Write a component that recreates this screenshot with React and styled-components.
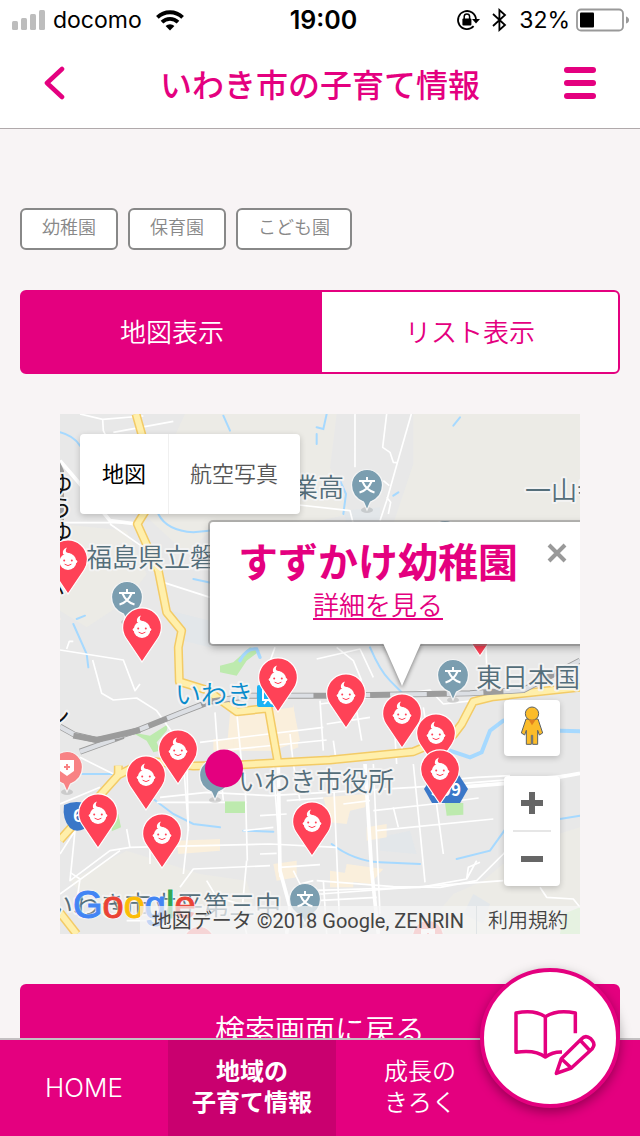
import React from "react";
import styled, { createGlobalStyle, css } from "styled-components";

const pink = "#e4007f";
const jp = `"Noto Sans CJK JP", sans-serif`;

const GlobalStyle = createGlobalStyle`
  *, *::before, *::after { box-sizing: border-box; }
  body { margin: 0; font-family: ${jp}; font-weight: 350; background: #f8f4f5; }
  button { font: inherit; border: 0; padding: 0; margin: 0; background: none; cursor: pointer; }
  a { color: inherit; text-decoration: none; }
  svg { display: block; flex: none; }
`;

const Shell = styled.div`
  display: flex;
  flex-direction: column;
  height: 100vh;
`;

/* ---------- status bar ---------- */

const StatusBar = styled.div`
  display: grid;
  grid-template-columns: 1fr auto 1fr;
  align-items: center;
  flex: none;
  height: 40px;
  padding: 0 11px 0 12px;
  background: #fff;
  color: #000;
  font-family: Inter, sans-serif;
  font-size: 23px;
  font-weight: 400;
`;

const StatusGroup = styled.div`
  display: flex;
  align-items: center;
  justify-content: ${(p) => (p.$end ? "flex-end" : "flex-start")};
  gap: ${(p) => (p.$end ? 12 : 8)}px;
`;

const Carrier = styled.span`
  margin-right: 6px;
`;

const Clock = styled.time`
  padding-left: 6px;
  font-size: 25px;
  font-weight: 600;
`;

const BatteryRow = styled.span`
  display: flex;
  align-items: center;
  gap: 6px;
`;

/* ---------- header ---------- */

const Header = styled.header`
  display: flex;
  align-items: center;
  justify-content: space-between;
  flex: none;
  height: 89px;
  padding: 0 38px 2px 32px;
  background: #fff;
  border-bottom: 1px solid #b0a9ab;
`;

const IconButton = styled.button`
  display: flex;
  align-items: center;
  justify-content: center;
  width: 44px;
  height: 44px;
  color: ${pink};
`;

const Title = styled.h1`
  flex: 1;
  margin: 0;
  padding-left: 6px;
  color: ${pink};
  font-size: 32px;
  line-height: 40px;
  font-weight: 500;
  text-align: center;
`;

/* ---------- main ---------- */

const Main = styled.main`
  flex: 1;
  min-height: 0;
  overflow-y: auto;
  scrollbar-width: none;
  display: flex;
  flex-direction: column;
  padding: 79px 20px 40px;
`;

const Tags = styled.ul`
  display: flex;
  gap: 10px;
  margin: 0 0 40px;
  padding: 0;
  list-style: none;
`;

const Tag = styled.li`
  height: 42px;
  padding: 0 20px;
  border: 2px solid #888;
  border-radius: 6px;
  background: #fff;
  color: #888;
  font-size: 18px;
  line-height: 32px;
`;

const Segments = styled.div`
  display: flex;
  flex: none;
  height: 84px;
  margin-bottom: 40px;
  border: 2px solid ${pink};
  border-radius: 6px;
  overflow: hidden;
  background: ${pink};
`;

const Segment = styled.button`
  flex: ${(p) => (p.$active ? "1 0 4px" : "1 0 0")};
  && { padding-bottom: 4px; }
  background: ${(p) => (p.$active ? pink : "#fff")};
  color: ${(p) => (p.$active ? "#fff" : pink)};
  font-size: 26px;
`;

const BackToSearch = styled.a`
  flex: none;
  margin-top: 50px;
  height: 92px;
  border-radius: 6px;
  background: ${pink};
  color: #fff;
  font-size: 30px;
  line-height: 88px;
  text-align: center;
`;

/* ---------- map ---------- */

const MapFrame = styled.section`
  position: relative;
  flex: none;
  height: 520px;
  margin: 0 40px;
  overflow: hidden;
  background: #e8e8e8;
`;

const MapDrawing = styled.svg`
  width: 100%;
  height: 100%;
`;

const controlBox = css`
  background: #fff;
  border-radius: 4px;
  box-shadow: 0 2px 6px rgba(0, 0, 0, 0.2);
`;

const MapTypes = styled.div`
  ${controlBox}
  position: absolute;
  top: 20px;
  left: 20px;
  display: flex;
  height: 80px;
`;

const MapType = styled.button`
  && { padding: 0 22px 4px; }
  font-size: 22px;
  font-weight: ${(p) => (p.$active ? 400 : 350)};
  color: ${(p) => (p.$active ? "#000" : "#565656")};
  & + & { box-shadow: inset 1px 0 #f0f0f0; }
`;

const MapControls = styled.div`
  position: absolute;
  right: 20px;
  bottom: 48px;
  display: flex;
  flex-direction: column;
  gap: 20px;
`;

const Pegman = styled.button`
  ${controlBox}
  width: 56px;
  height: 56px;
`;

const ZoomBox = styled.div`
  ${controlBox}
  display: flex;
  flex-direction: column;
  align-items: center;
  height: 110px;
`;

const ZoomButton = styled.button`
  display: flex;
  flex: 1;
  align-items: center;
  justify-content: center;
  width: 56px;
`;

const ZoomRule = styled.hr`
  width: 38px;
  height: 2px;
  margin: 0;
  border: 0;
  background: #e6e6e6;
`;

const InfoWindow = styled.div`
  position: absolute;
  top: 108px;
  left: 150px;
  width: 386px;
  height: 122px;
  padding: 14px 50px 0 0;
  background: #fff;
  border-radius: 3px;
  box-shadow: 0 0 0 2px rgba(120, 120, 120, 0.45), 0 3px 8px rgba(0, 0, 0, 0.35);
  color: ${pink};
  text-align: center;
`;

const InfoTail = styled.svg`
  position: absolute;
  top: 121px;
  left: 168px;
  overflow: visible;
  filter: drop-shadow(0 2px 2px rgba(0, 0, 0, 0.45));
  clip-path: inset(0 -8px -8px -8px);
`;

const InfoTitle = styled.h2`
  margin: 0;
  font-size: 40px;
  line-height: 48px;
  font-weight: 700;
`;

const InfoLink = styled.a`
  display: inline-block;
  border-bottom: 2px solid ${pink};
  font-size: 26px;
  line-height: 28px;
  margin-top: 6px;
`;

const CloseButton = styled.button`
  position: absolute;
  top: 19px;
  left: 335px;
  width: 24px;
  height: 24px;
`;

const Logo = styled.span`
  position: absolute;
  left: 13px;
  bottom: 7px;
  font-family: "Liberation Sans", sans-serif;
  font-size: 38px;
  line-height: 44px;
  text-shadow: 0 0 2px #fff, 0 0 2px #fff, 0 0 3px #fff;
  -webkit-text-stroke: 1px currentColor;
`;

const LogoLetter = styled.span`
  color: ${(p) => p.$color};
`;

const Credits = styled.div`
  position: absolute;
  right: 0;
  bottom: 0;
  display: flex;
  height: 28px;
  background: rgba(245, 245, 245, 0.72);
  color: #444;
  font-family: Roboto, ${jp};
  font-size: 20px;
  font-weight: 400;
  line-height: 30px;
  white-space: nowrap;
`;

const Credit = styled.span`
  padding: 0 12px;
  & + & { box-shadow: inset 1px 0 #e0e4e6; font-weight: 350; }
`;

const Label = styled.text`
  font-family: ${jp};
  font-size: ${(p) => p.$size || 26}px;
  font-weight: ${(p) => p.$weight || 350};
  fill: ${(p) => p.$color || "#546e7a"};
  stroke: ${(p) => (p.$plain ? "none" : "rgba(245, 245, 245, 0.9)")};
  stroke-width: 4px;
  stroke-linejoin: round;
  paint-order: stroke;
`;

const SideLabel = styled(Label)`
  writing-mode: vertical-rl;
`;

/* ---------- bottom navigation ---------- */

const Nav = styled.nav`
  position: relative;
  display: grid;
  grid-template-columns: 168fr 168fr 168fr 136fr;
  flex: none;
  height: 98px;
  border-top: 2px solid #c4c0c2;
  background: ${pink};
`;

const NavItem = styled.a`
  display: flex;
  align-items: center;
  justify-content: center;
  padding-bottom: 2px;
  background: ${(p) => (p.$active ? "#c9006f" : "transparent")};
  color: #fff;
  font-family: Inter, ${jp};
  font-size: ${(p) => (p.$latin ? 26 : 24)}px;
  font-weight: ${(p) => (p.$active ? 700 : p.$latin ? 300 : 350)};
  line-height: 31px;
  text-align: center;
`;

const RecordButton = styled.button`
  position: absolute;
  top: -72px;
  right: 20px;
  width: 140px;
  height: 140px;
  && { border: 4px solid ${pink}; }
  border-radius: 50%;
  && { background: #fff; }
  box-shadow: 0 4px 12px rgba(0, 0, 0, 0.35);
`;

/* ---------- drawings ---------- */

const SignalIcon = () => (
  <svg width="33" height="20" fill="#bdbdbd" aria-hidden="true">
    <rect x="0" y="11" width="6" height="9" rx="1.5" />
    <rect x="9" y="8" width="6" height="12" rx="1.5" />
    <rect x="18" y="4" width="6" height="16" rx="1.5" />
    <rect x="27" y="0" width="6" height="20" rx="1.5" />
  </svg>
);

const WifiIcon = () => (
  <svg width="28" height="21" viewBox="0 0 28 21" aria-hidden="true">
    <g fill="none" stroke="#000" strokeWidth="3.8">
      <path d="M1.4 7.4A18 18 0 0 1 26.6 7.4" />
      <path d="M6 12.2A11.4 11.4 0 0 1 22 12.2" />
    </g>
    <path d="M14 20.5L9.6 16A6.3 6.3 0 0 1 18.4 16Z" />
  </svg>
);

const RotationLockIcon = () => (
  <svg width="24" height="22" viewBox="0 0 24 22" aria-hidden="true">
    <path d="M17.6 17.2A9 9 0 1 1 20 10.5" fill="none" stroke="#000" strokeWidth="1.8" />
    <path d="M16 10H24L20 14.5Z" />
    <rect x="6.4" y="9.6" width="9" height="6.8" rx="1" />
    <path d="M8.2 10V7.6a2.7 2.7 0 0 1 5.4 0V10" fill="none" stroke="#000" strokeWidth="1.5" />
  </svg>
);

const BluetoothIcon = () => (
  <svg width="15" height="24" viewBox="0 0 15 24" aria-hidden="true">
    <path d="M1 6L13 17L7.4 22V2L13 7L1 18" fill="none" stroke="#000" strokeWidth="1.8" />
  </svg>
);

const BatteryIcon = () => (
  <svg width="53" height="24" viewBox="0 0 53 24" aria-hidden="true">
    <rect x="1" y="1.5" width="46" height="21" rx="4" fill="none" stroke="#999" strokeWidth="1.8" />
    <rect x="4" y="4.5" width="14" height="15" rx="1" />
    <path d="M50 8.5Q53 9.500 53 12T50 15.500Z" fill="#999" />
  </svg>
);

const BackIcon = () => (
  <svg width="22" height="34" viewBox="0 0 22 34" aria-hidden="true">
    <path d="M19 3L4 17L19 31" fill="none" stroke={pink} strokeWidth="4.6" strokeLinecap="round" strokeLinejoin="round" />
  </svg>
);

const MenuIcon = () => (
  <svg width="32" height="32" viewBox="0 0 32 32" fill={pink} aria-hidden="true">
    <rect y="0" width="32" height="6" rx="3" />
    <rect y="13" width="32" height="6" rx="3" />
    <rect y="26" width="32" height="6" rx="3" />
  </svg>
);

const PegmanIcon = () => (
  <svg width="56" height="56" viewBox="0 0 168 168" aria-hidden="true">
    <g fill="#fbbc2a" stroke="#5c6266" strokeWidth="3" strokeLinejoin="round">
      <path d="M66 57H102L116 99L106 105L101 91V133H86V106H82V133H67V91L62 105L52 99Z" />
      <circle cx="84" cy="41" r="20" />
    </g>
    <path d="M74 59H95L84 76Z" fill="#e2801e" />
  </svg>
);

const BookIcon = () => (
  <svg width="132" height="132" viewBox="492 66 396 396" aria-hidden="true">
    <g fill="none" stroke={pink} strokeWidth="10.5" strokeLinejoin="round">
      <path d="M726 306Q698 305 676 321Q645 298 588 307V189Q642 177 676 200Q712 177 766 189V250" />
      <path d="M676 200V322" />
      <path d="M709 370L724 326L784 267Q797 253 812 266L817 272Q827 284 816 297L754 354Z" />
      <path d="M724 326L754 354M780 270L808 300" />
    </g>
  </svg>
);

const BabyPin = ({ x, y }) => (
  <g transform={`translate(${x} ${y})`}>
    <path d="M0 54L-16.2 30A19.4 19.4 0 1 1 16.2 30Z" fill="#ff4257" stroke="#fff" strokeWidth="1.2" />
    <circle cy="21.6" r="8.4" fill="#fff" />
    <path d="M-7.8 21.6h15.6" stroke="#fff" strokeWidth="3" strokeLinecap="round" />
    <path d="M-1 7.6Q-6 9.500-5 14L0 15L2.500 13.500Q-2.500 13.200-2.200 10.600Q-2 9-1 7.600Z" fill="#fff" />
    <circle cx="-3.8" cy="20.6" r="1" fill="#ff4257" />
    <circle cx="3.8" cy="20.6" r="1" fill="#ff4257" />
    <path d="M-3.4 24.200Q0 27 3.400 24.200" fill="none" stroke="#ff4257" strokeWidth="1" />
  </g>
);

const PlacePin = ({ x, y, color = "#7b9eb0", children }) => (
  <g transform={`translate(${x} ${y})`}>
    <ellipse cy="25" rx="6" ry="3" fill="#000" opacity=".12" />
    <path d="M0 25L-3.5 17Q-15.5 12-15.5 0A15.5 15.5 0 0 1 15.5 0Q15.5 12 3.5 17Z" fill={color} stroke="#f5f5f5" strokeWidth="1.2" />
    {children}
  </g>
);

const SchoolPin = ({ x, y }) => (
  <PlacePin x={x} y={y}>
    <path d="M0-8V-4M-8-4H8M-4.5-3.5Q-1 5 7.5 7.5M4.5-3.5Q1 5-7.5 7.5" fill="none" stroke="#fff" strokeWidth="2" />
  </PlacePin>
);

const HospitalPin = ({ x, y }) => (
  <PlacePin x={x} y={y} color="#f88284">
    <path d="M-7-7H7V4L0 9L-7 4Z" fill="#fff" />
    <path d="M-3 0H3M0-3V3" stroke="#f88284" strokeWidth="2" />
  </PlacePin>
);

const babyPins = [
  [420, 188], [8, 126], [82, 194], [218, 244], [286, 260], [342, 280],
  [376, 300], [380, 336], [118, 316], [86, 342], [38, 380], [102, 400], [252, 388],
];

const highways = [
  "M228 0L245 60L257 290L232 330L295 470L320 595L365 650L355 700L358 803L440 828L530 893L625 883L653 1040",
  "M0 1278L175 1083L260 1040L400 1056L530 1053L810 1038L1060 1013L1180 963L1205 930L1240 863L1300 848L1560 820",
  "M175 1083V1055",
  "M0 1496L50 1560",
];

const railways = [
  "M0 938L45 963L110 978L180 966L235 948L360 898L450 863L570 845L810 845L1230 838L1390 828L1560 740",
  "M60 1013L190 966",
];

const streets = [
  "M60 0L128 16L250 6M128 16L130 50L150 90M160 55L340 22",
  "M0 140L60 210L150 320L230 330M0 326H200M150 330L250 400",
  "M310 505L450 550M0 708L190 738L225 830L240 810M20 705L28 682H40",
  "M98 738L125 838L160 858L230 852L290 890L340 960L380 1010L385 1250",
  "M690 270L870 290L880 330M885 0V160M980 0L968 100L990 115L1000 145L1012 146M1054 0L1012 146L980 260L960 320M970 200L988 215M980 250L992 265L985 300",
  "M770 735L900 705L940 790M830 700L880 740L905 800M645 700L620 770",
  "M465 895L475 1035M530 893L545 1050M780 860L790 1010M640 1060L655 1260L660 1390",
  "M420 985L790 940M480 1010L800 978M780 870L1110 828L1150 870L1240 860M800 930L930 910",
  "M300 1150L440 1135L630 1145L1060 1120L1560 1080M290 1165H560",
  "M370 1040L385 1240L370 1380M480 1060L490 1160M555 1080L562 1340M600 1205L680 1200",
  "M200 1245L210 1300L630 1290L830 1300M0 1320L45 1250L30 1400L150 1310L210 1300",
  "M30 1375L60 1395L45 1500M180 1310L0 1440M270 1240V1350M360 1420L400 1365L630 1355",
  "M660 1360L780 1352M700 1370L720 1410L760 1400M680 1160L790 1152M820 1080L840 1560M880 830L905 980M940 1050L960 1500M1000 880L1010 1050",
  "M940 1190L1120 1170L1256 1152M950 1250L1300 1215M1060 1050L1080 1250L1095 1405M1120 1100L1150 1320M1140 1100L1250 1090L1350 1085",
  "M770 1400L1000 1418L1140 1420L1250 1400L1330 1320L1400 1240M740 1430L1080 1420L1220 1395L1250 1340M1220 1395L1225 1360L1260 1345",
  "M780 1440L1330 1400M770 1460L950 1450M790 1400L800 1560M200 1520L260 1520M440 1400L470 1450L540 1470M560 1340L545 1500L560 1560",
  "M720 1160L700 1050L690 960M850 1170L930 1160M1000 1180L1015 1240M1440 1420L1460 1450L1540 1455L1560 1480M1278 700L1280 760",
  "M60 1030L180 1090M0 1170L120 1120M820 980L830 1050M1090 880L1110 1000M640 1240L550 1250M600 1320L650 1318",
];

const wideStreets = [
  "M0 140L60 210L150 320L230 330",
  "M655 1060L660 1370L690 1480L680 1560",
  "M915 1050L935 1370L955 1560",
  "M1190 1120L1440 1100L1560 1078",
];

const waters = [
  "M0 55Q40 65 60 95", "M490 5L510 50", "M770 40L790 45L800 0M770 90V60",
  "M295 300Q320 350 400 355L470 348", "M400 495L470 510", "M40 630L80 720L85 760M50 615L75 605",
  "M1180 35L1200 10", "M840 200L858 240L850 300M1000 245L1015 235",
  "M930 700Q960 770 990 800L1030 840", "M280 1155L340 1200L400 1230L480 1240M550 1250L640 1253",
  "M815 1290Q880 1340 960 1345L1080 1350M1190 1335L1290 1310L1340 1240L1400 1200L1500 1215L1560 1205",
  "M60 1080L200 1080",
];

const MapArtwork = () => (
  <svg width="520" height="520" viewBox="0 0 1560 1560">
    <rect width="1560" height="1560" fill="#e8e8e8" />
    <g fill="#ecebe6">
      <path d="M375 0H830L810 160L870 300L690 340L450 350L380 420L240 290Z" />
      <path d="M1060 0H1560V330H1000L1030 240L1060 150Z" />
      <path d="M0 330L200 350L260 480L200 560L80 640L0 590Z" />
      <path d="M30 1400L200 1310L420 1380L560 1400L580 1470L300 1500L100 1480Z" />
      <path d="M1560 1240L1400 1290L1270 1400L1180 1440L1080 1560H1560Z" />
    </g>
    <g fill="#e3e7ea">
      <path d="M330 590L450 620V700L370 680Z" />
      <path d="M960 1270L1050 1250L1070 1320L960 1310Z" />
      <path d="M1240 1440L1290 1470L1270 1530L1210 1500Z" />
      <path d="M850 290L960 280V330H860Z" />
    </g>
    <g fill="#faefdc">
      <path d="M510 900L620 890L700 880L720 980L640 1010L500 1010Z" />
      <path d="M460 975H520V1010H460Z" />
      <path d="M350 1280L480 1275V1310L355 1320Z" />
      <path d="M640 1350L710 1340V1390L650 1400Z" />
      <path d="M790 1150L920 1140L915 1180L870 1190L860 1230L810 1225Z" />
      <path d="M920 1240L980 1230V1270L920 1280Z" />
      <path d="M860 1350L970 1365L930 1410L850 1400ZM810 1370L880 1380V1420H810Z" />
      <path d="M700 870L715 1000L690 1010Z" />
    </g>
    <g fill="#bdeaae">
      <path d="M480 755L520 745L570 700L600 710L560 740L530 785L480 775Z" />
      <path d="M215 955L270 965L325 930L320 950L290 985L300 1010L280 1015L260 980Z" />
      <path d="M160 1210L175 1200L183 1240L155 1252Z" />
      <path d="M1510 1500L1560 1480V1560H1500Z" />
    </g>
    <g fill="none" stroke="#a6d9ff" strokeWidth="6" strokeLinecap="round">
      {waters.map((d) => <path key={d} d={d} />)}
      <path d="M540 740Q560 700 590 705L600 730" strokeWidth="10" />
      <path d="M1170 1010L1230 1030L1265 1015L1290 950L1330 920M1500 950L1560 952" strokeWidth="12" />
    </g>
    <g fill="none" stroke="#fff" strokeWidth="5" strokeLinejoin="round">
      {streets.map((d) => <path key={d} d={d} />)}
    </g>
    <g fill="none" stroke="#fff" strokeWidth="11" strokeLinejoin="round">
      {wideStreets.map((d) => <path key={d} d={d} />)}
    </g>
    <g fill="#bdeaae">
      <path d="M495 1162H555V1197H495Z" />
      <path d="M1155 1167H1210V1202L1160 1205Z" />
    </g>
    <g fill="none" strokeLinejoin="round">
      {highways.map((d) => <path key={d} d={d} stroke="#f3cb66" strokeWidth="27" />)}
      {highways.map((d) => <path key={d} d={d} stroke="#ffefab" strokeWidth="18" />)}
      {railways.map((d) => <path key={d} d={d} stroke="#9c9c9c" strokeWidth="18" />)}
      {railways.map((d) => <path key={d} d={d} stroke="#dcdfe4" strokeWidth="13" strokeDasharray="110 60" />)}
    </g>
    <path d="M40 965L110 978L240 948" fill="none" stroke="#9c9c9c" strokeWidth="18" />
    <path d="M0 145L12 170V360H0Z" fill="#9c9c9c" />
  </svg>
);

const MapPicture = () => (
  <MapDrawing viewBox="0 0 520 520" preserveAspectRatio="xMinYMin slice" role="img" aria-label="地図">
    <MapArtwork />
    <SideLabel x="1" y="58" $size={24} $weight={400} $color="#111">ゆうゆう</SideLabel>
    <SideLabel x="-7" y="160" $size={24} $weight={400} $color="#111">ぶく</SideLabel>
    <SideLabel x="-2" y="290" $size={24} $weight={400} $color="#111">ン</SideLabel>
    <Label x="232" y="83">業高</Label>
    <Label x="465" y="86">一山寺</Label>
    <Label x="26" y="153">福島県立磐城</Label>
    <Label x="416" y="273">東日本国際</Label>
    <Label x="115" y="290" $color="#0a8ccc">いわき</Label>
    <Label x="178" y="377">いわき市役所</Label>
    <Label x="-13" y="501">いわき市立平第三中</Label>
    <rect x="197" y="271" width="22" height="22" rx="2" fill="#1ab3f5" />
    <path d="M203 275H213V286H203ZM204 290L207 286M212 290L209 286" fill="none" stroke="#fff" strokeWidth="2" />
    <SchoolPin x={67} y={183} />
    <SchoolPin x={307} y={71} />
    <SchoolPin x={385} y={122} />
    <SchoolPin x={393} y={261} />
    <SchoolPin x={245} y={485} />
    <PlacePin x={155} y={361} />
    <HospitalPin x={7} y={353} />
    <HospitalPin x={139} y={528} />
    <HospitalPin x={368} y={522} />
    <path d="M4 391Q14 386 24 389V415Q16 419 10 414Q2 405 4 391Z" fill="#3a77c8" />
    <Label x="13" y="408" $size={17} $weight={700} $color="#fff" $plain>6</Label>
    <path d="M364 375L373 361H399L408 375L400 389H372Z" fill="#3a77c8" />
    <Label x="371" y="382" $size={17} $weight={700} $color="#fff" $plain>399</Label>
    {babyPins.map(([x, y]) => <BabyPin key={`${x}-${y}`} x={x} y={y} />)}
    <circle cx="164" cy="354.5" r="19" fill={pink} />
  </MapDrawing>
);

const logoLetters = [
  ["G", "#4285f4"], ["o", "#ea4335"], ["o", "#fbbc05"],
  ["g", "#4285f4"], ["l", "#34a853"], ["e", "#ea4335"],
];

const FacilityMap = () => (
  <MapFrame>
    <MapPicture />
    <InfoWindow>
      <InfoTitle>すずかけ幼稚園</InfoTitle>
      <InfoLink href="#detail">詳細を見る</InfoLink>
      <CloseButton aria-label="閉じる">
        <svg width="24" height="24" viewBox="0 0 24 24" aria-hidden="true">
          <path d="M4 4L20 20M20 4L4 20" stroke="#999" strokeWidth="4" />
        </svg>
      </CloseButton>
      <InfoTail width="48" height="44" viewBox="0 0 48 44" aria-hidden="true">
        <path d="M5 0H43L24 43Z" fill="#fff" />
      </InfoTail>
    </InfoWindow>
    <MapTypes>
      <MapType $active>地図</MapType>
      <MapType>航空写真</MapType>
    </MapTypes>
    <MapControls>
      <Pegman aria-label="ストリートビュー"><PegmanIcon /></Pegman>
      <ZoomBox>
        <ZoomButton aria-label="拡大">
          <svg width="22" height="22" viewBox="0 0 22 22" aria-hidden="true">
            <path d="M0 11H22M11 0V22" stroke="#666" strokeWidth="6" />
          </svg>
        </ZoomButton>
        <ZoomRule />
        <ZoomButton aria-label="縮小">
          <svg width="22" height="6" viewBox="0 0 22 6" aria-hidden="true">
            <path d="M0 3H22" stroke="#666" strokeWidth="6" />
          </svg>
        </ZoomButton>
      </ZoomBox>
    </MapControls>
    <Logo>
      {logoLetters.map(([letter, color], i) => (
        <LogoLetter key={i} $color={color}>{letter}</LogoLetter>
      ))}
    </Logo>
    <Credits>
      <Credit>地図データ ©2018 Google, ZENRIN</Credit>
      <Credit as="a" href="#terms">利用規約</Credit>
    </Credits>
  </MapFrame>
);

export default function App() {
  return (
    <>
      <GlobalStyle />
      <Shell>
        <StatusBar>
          <StatusGroup>
            <SignalIcon />
            <Carrier>docomo</Carrier>
            <WifiIcon />
          </StatusGroup>
          <Clock>19:00</Clock>
          <StatusGroup $end>
            <RotationLockIcon />
            <BluetoothIcon />
            <BatteryRow>32%<BatteryIcon /></BatteryRow>
          </StatusGroup>
        </StatusBar>
        <Header>
          <IconButton aria-label="戻る"><BackIcon /></IconButton>
          <Title>いわき市の子育て情報</Title>
          <IconButton aria-label="メニュー"><MenuIcon /></IconButton>
        </Header>
        <Main>
          <Tags>
            <Tag>幼稚園</Tag>
            <Tag>保育園</Tag>
            <Tag>こども園</Tag>
          </Tags>
          <Segments>
            <Segment $active>地図表示</Segment>
            <Segment>リスト表示</Segment>
          </Segments>
          <FacilityMap />
          <BackToSearch href="#search">検索画面に戻る</BackToSearch>
        </Main>
        <Nav>
          <NavItem href="#home" $latin>HOME</NavItem>
          <NavItem href="#area" $active>地域の<br />子育て情報</NavItem>
          <NavItem href="#growth">成長の<br />きろく</NavItem>
          <RecordButton aria-label="記録する"><BookIcon /></RecordButton>
        </Nav>
      </Shell>
    </>
  );
}
